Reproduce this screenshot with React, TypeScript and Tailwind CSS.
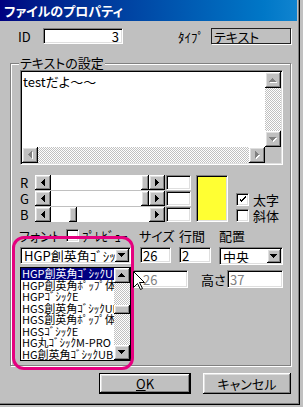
import React from "react";

const bevel =
  "border border-t-[#808080] border-l-[#808080] border-b-white border-r-white shadow-[inset_1px_1px_0_#000,inset_-1px_-1px_0_#dfdfdf]";
const sunken = `bg-white ${bevel}`;
const raised =
  "bg-[#c0c0c0] shadow-[inset_-1px_-1px_0_#000,inset_1px_1px_0_#fff,inset_-2px_-2px_0_#808080,inset_2px_2px_0_#dfdfdf]";
const dither =
  "bg-[repeating-conic-gradient(#c0c0c0_0_25%,#ffffff_0_50%)] bg-[length:2px_2px]";

type Dir = "up" | "down" | "left" | "right";

// tiny pixel triangle like the old scroll arrows
const Tri = ({ dir, color = "#000", shadow = false }: { dir: Dir; color?: string; shadow?: boolean }) => {
  const vertical = dir === "up" || dir === "down";
  const w = vertical ? 7 : 4;
  const h = vertical ? 4 : 7;
  const rects = (fill: string, o: number) =>
    [0, 1, 2, 3].map((i) => {
      if (dir === "up") return <rect key={fill + i} x={3 - i + o} y={i + o} width={2 * i + 1} height={1} fill={fill} />;
      if (dir === "down") return <rect key={fill + i} x={3 - i + o} y={3 - i + o} width={2 * i + 1} height={1} fill={fill} />;
      if (dir === "left") return <rect key={fill + i} x={i + o} y={3 - i + o} width={1} height={2 * i + 1} fill={fill} />;
      return <rect key={fill + i} x={3 - i + o} y={3 - i + o} width={1} height={2 * i + 1} fill={fill} />;
    });
  return (
    <svg width={w + 1} height={h + 1} shapeRendering="crispEdges">
      {shadow && rects("#fff", 1)}
      {rects(color, 0)}
    </svg>
  );
};

const ArrowBtn = ({ dir, disabled = false, className = "" }: { dir: Dir; disabled?: boolean; className?: string }) => (
  <div className={`${raised} flex items-center justify-center shrink-0 ${className}`}>
    <Tri dir={dir} color={disabled ? "#808080" : "#000"} shadow={disabled} />
  </div>
);

const Slider = ({ value }: { value: number }) => (
  <div className="flex h-[15px] w-[130px]">
    <ArrowBtn dir="left" className="w-[16px] h-full" />
    <div className="flex-1 bg-white flex">
      <div className={`${raised} w-[8px] h-full`} style={{ marginLeft: Math.round((value / 255) * 90) }} />
    </div>
    <ArrowBtn dir="right" className="w-[16px] h-full" />
  </div>
);

const Check = ({ checked }: { checked?: boolean }) => (
  <div className={`${sunken} w-[13px] h-[13px] shrink-0 flex items-center justify-center`}>
    {checked && (
      <svg width="7" height="7" shapeRendering="crispEdges">
        <path d="M0 2h1v3h1v1h1v-1h1v-1h1v-1h1v-1h1v-2h-1v1h-1v1h-1v1h-1v1h-1v-1h-1v-1h-1z" fill="#000" />
      </svg>
    )}
  </div>
);

const Combo = ({ text, w, h }: { text: string; w: string; h: string }) => (
  <div className={`${sunken} ${w} ${h} flex p-[1px]`}>
    <div className="flex-1 overflow-hidden whitespace-nowrap pl-[2px] flex items-center">{text}</div>
    <ArrowBtn dir="down" className="w-[14px] h-full" />
  </div>
);

const fonts = [
  "HGP創英角ｺﾞｼｯｸUB",
  "HGP創英角ﾎﾟｯﾌﾟ体",
  "HGPｺﾞｼｯｸE",
  "HGS創英角ｺﾞｼｯｸUB",
  "HGS創英角ﾎﾟｯﾌﾟ体",
  "HGSｺﾞｼｯｸE",
  "HG丸ｺﾞｼｯｸM-PRO",
  "HG創英角ｺﾞｼｯｸUB",
];

export default function App() {
  return (
    <div className="relative w-[303px] h-[407px] overflow-hidden bg-[#c0c0c0] text-[13px] leading-none text-black whitespace-nowrap font-['Noto_Sans_CJK_JP',sans-serif] [font-feature-settings:'palt']">
      <div className="w-[300px] h-[405px] shadow-[inset_-1px_-1px_0_#000,inset_-2px_-2px_0_#808080]">
        {/* title */}
        <div className="h-[21px] w-[297px] bg-linear-to-r from-[#000080] to-[#1084d0] flex items-center pl-[4px] text-white font-bold">
          ファイルのプロパティ
        </div>

        {/* id / type */}
        <div className="mt-[7px] flex h-[16px] items-center">
          <span className="ml-[18px] w-[25px]">ID</span>
          <div className={`${sunken} w-[80px] h-[16px] flex items-center justify-end pr-[3px]`}>3</div>
          <span className="ml-[55px] w-[33px]">ﾀｲﾌﾟ</span>
          <div className="w-[80px] h-[16px] border border-[#202020] shadow-[1px_1px_0_#fff] flex items-center pl-[2px]">
            テキスト
          </div>
        </div>

        {/* group */}
        <div className="relative mt-[19px] ml-[10px] w-[281px] h-[303px] border border-[#808080] shadow-[inset_1px_1px_0_#fff,1px_1px_0_#fff]">
          <span className="absolute left-[8px] top-[-8px] px-[1px] h-[14px] leading-[14px] bg-[#c0c0c0]">テキストの設定</span>
          <div className="pl-[9px] pt-[6px]">
            {/* text area */}
            <div className={`${sunken} w-[263px] h-[95px] p-[1px] flex flex-col`}>
              <div className="flex flex-1">
                <div className="flex-1 pl-[1px] pt-[3px]">testだよ～～</div>
                <div className="w-[16px] flex flex-col">
                  <ArrowBtn dir="up" disabled className="h-[16px]" />
                  <div className={`flex-1 ${dither}`} />
                  <ArrowBtn dir="down" disabled className="h-[16px]" />
                </div>
              </div>
              <div className="flex h-[16px]">
                <ArrowBtn dir="left" disabled className="w-[16px]" />
                <div className={`flex-1 ${dither}`} />
                <ArrowBtn dir="right" disabled className="w-[16px]" />
                <div className="w-[16px] bg-[#c0c0c0]" />
              </div>
            </div>

            {/* colour */}
            <div className="mt-[10px] flex">
              <div className="flex flex-col gap-[1px]">
                {[
                  ["R", 255],
                  ["G", 255],
                  ["B", 51],
                ].map(([l, v]) => (
                  <div key={l} className="flex h-[15px] items-center">
                    <span className="w-[15px]">{l}</span>
                    <Slider value={v as number} />
                    <div className={`${sunken} ml-[1px] w-[25px] h-[15px]`} />
                  </div>
                ))}
              </div>
              <div className={`${bevel} ml-[5px] w-[32px] h-[47px] bg-[#ffff33]`} />
              <div className="ml-[8px] mt-[18px] flex flex-col gap-[3px]">
                <div className="flex items-center h-[13px]">
                  <Check checked />
                  <span className="ml-[4px]">太字</span>
                </div>
                <div className="flex items-center h-[13px]">
                  <Check />
                  <span className="ml-[4px]">斜体</span>
                </div>
              </div>
            </div>

            {/* font labels */}
            <div className="mt-[7px] flex h-[13px] items-center">
              <span className="ml-[-1px] w-[47px] shrink-0">フォント</span>
              <Check />
              <span className="ml-[3px] w-[57px] shrink-0">ﾌﾟﾚﾋﾞｭｰ</span>
              <span className="w-[40px] shrink-0">サイズ</span>
              <span className="w-[40px] shrink-0">行間</span>
              <span>配置</span>
            </div>

            {/* font controls */}
            <div className="mt-[5px] flex h-[18px] items-start">
              <Combo text="HGP創英角ｺﾞｼｯｸUB" w="w-[111px]" h="h-[17px]" />
              <div className={`${sunken} ml-[9px] w-[31px] h-[16px] flex items-center pl-[2px]`}>26</div>
              <div className={`${sunken} ml-[8px] w-[32px] h-[16px] flex items-center pl-[2px]`}>2</div>
              <div className="ml-[8px]">
                <Combo text="中央" w="w-[64px]" h="h-[18px]" />
              </div>
            </div>

            {/* size */}
            <div className="mt-[5px] flex h-[18px] items-center">
              <div className={`${sunken} ml-[113px] w-[55px] h-[18px] flex items-center pl-[9px] text-[#808080]`}>26</div>
              <span className="ml-[13px] w-[26px]">高さ</span>
              <div className={`${sunken} w-[56px] h-[18px] flex items-center pl-[2px] text-[#808080]`}>37</div>
            </div>
          </div>
        </div>

        {/* buttons */}
        <div className="mt-[7px] flex">
          <button className={`${raised} ml-[99px] w-[92px] h-[21px] border border-black flex items-center justify-center`}>
            <span className="underline">O</span>K
          </button>
          <button className={`${raised} ml-[12px] w-[88px] h-[21px] flex items-center justify-center`}>キャンセル</button>
        </div>
      </div>

      {/* open dropdown list */}
      <div className="absolute left-[20px] top-[267px] w-[111px] h-[94px] border border-black bg-white flex text-[11px]">
        <div className="flex-1 overflow-hidden">
          {fonts.map((f, i) => (
            <div
              key={f}
              className={`h-[11.5px] leading-[11.5px] pl-[1px] overflow-hidden ${i === 0 ? "bg-[#000080] text-white" : ""}`}
            >
              {f}
            </div>
          ))}
        </div>
        <div className="w-[16px] flex flex-col">
          <ArrowBtn dir="up" className="h-[15px]" />
          <div className={`flex-1 ${dither} pt-[22px]`}>
            <div className={`${raised} h-[9px]`} />
          </div>
          <ArrowBtn dir="down" className="h-[15px]" />
        </div>
      </div>

      {/* highlight ring */}
      <div className="absolute left-[12px] top-[236px] w-[122px] h-[134px] border-[3px] border-[#e5007f] rounded-[12px]" />

      {/* mouse pointer */}
      <svg className="absolute left-[133px] top-[271px]" width="13" height="20">
        <path d="M0.5 0.5 L0.5 16.5 L4.5 12.5 L7.5 18.5 L9.5 17.5 L6.5 11.5 L11.5 11.5 Z" fill="#fff" stroke="#000" />
      </svg>
    </div>
  );
}
